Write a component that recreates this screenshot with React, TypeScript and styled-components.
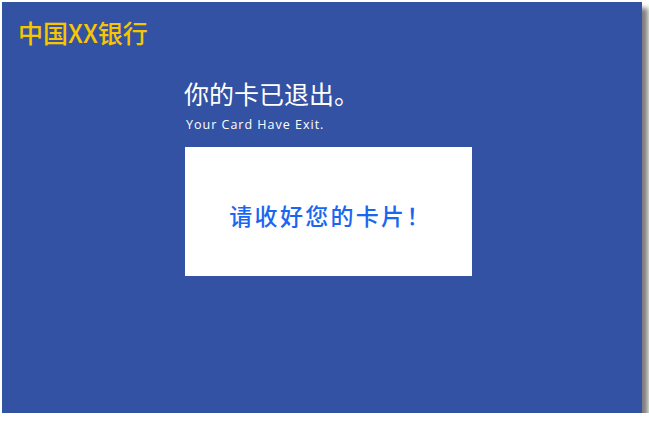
import React from "react";
import styled, { createGlobalStyle } from "styled-components";

const Global = createGlobalStyle`
  html, body { margin: 0; padding: 0; background: #ffffff; }
  body { font-family: "Noto Sans CJK SC", "Noto Sans", sans-serif; }
`;

const Screen = styled.div`
  margin: 2px 0 0 2px;
  width: 640px;
  height: 411px;
  background: #3352a4;
  box-shadow: 6px 6px 5px rgba(70, 70, 70, 0.7);
  display: flex;
  flex-direction: column;
`;

const Brand = styled.div`
  padding: 15px 0 0 16px;
  height: 30px;
  font-family: "Noto Sans CJK SC", sans-serif;
  font-size: 25px;
  font-weight: 500;
  line-height: 30px;
  color: #f7c600;
`;

const Content = styled.div`
  margin: 32px 0 0 182px;
  display: flex;
  flex-direction: column;
`;

const Title = styled.div`
  font-family: "Noto Sans CJK SC", sans-serif;
  font-size: 25px;
  line-height: 28px;
  color: #ffffff;
`;

const Subtitle = styled.div`
  margin: 10px 0 0 2px;
  font-family: "Open Sans", "Noto Sans", sans-serif;
  font-size: 12.5px;
  line-height: 15px;
  letter-spacing: 1px;
  color: #ffffff;
`;

const Card = styled.div`
  margin: 15px 0 0 1px;
  width: 287px;
  height: 129px;
  background: #ffffff;
  display: flex;
  align-items: center;
  justify-content: center;
`;

const Notice = styled.div`
  font-family: "Noto Sans CJK SC", sans-serif;
  font-size: 23px;
  font-weight: 500;
  line-height: 26px;
  letter-spacing: 2.3px;
  color: #1a66f0;
  padding: 6px 0 0 4px;
`;

export default function App() {
  return (
    <>
      <Global />
      <Screen>
        <Brand>中国XX银行</Brand>
        <Content>
          <Title>你的卡已退出。</Title>
          <Subtitle>Your Card Have Exit.</Subtitle>
          <Card>
            <Notice>请收好您的卡片！</Notice>
          </Card>
        </Content>
      </Screen>
    </>
  );
}
